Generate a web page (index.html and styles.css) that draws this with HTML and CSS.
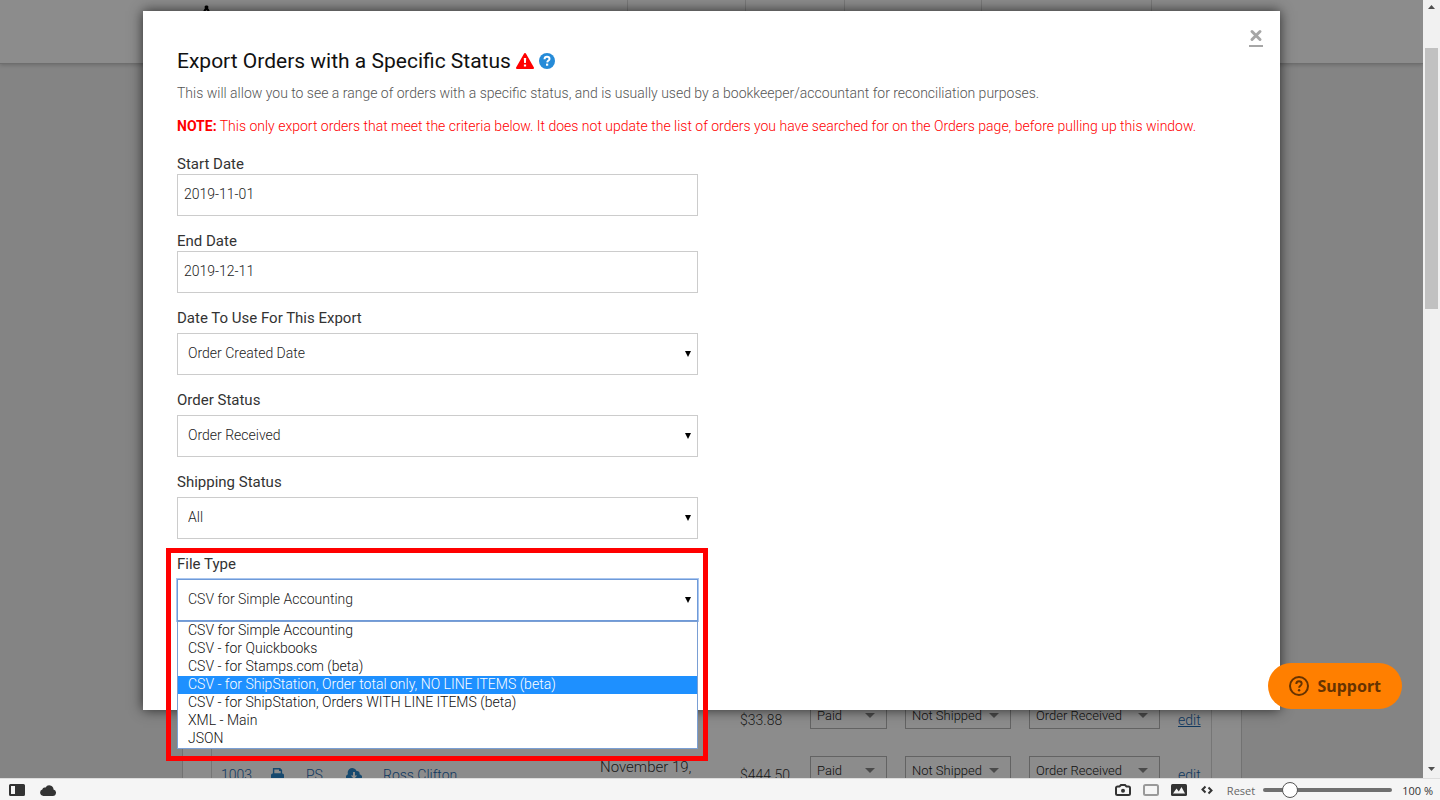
FILE: index.html
```html
<!DOCTYPE html>
<html lang="en">
<head>
    <meta charset="UTF-8">
    <meta name="viewport" content="width=device-width, initial-scale=1.0">
    <title>Export Orders</title>
    <link rel="stylesheet" href="styles.css">
</head>
<body>
    <div class="viewport">
        <div class="page">
            <header class="site-header">
                <svg class="logo" width="7" height="7" viewBox="0 0 7 7"><path d="M3.500 0.500a1.500 1.500 0 0 1 1.500 2.500L7 6.500H5L3.500 5 2 6.500H0L2 3A1.500 1.500 0 0 1 3.500.5z" fill="#000"/></svg>
                <nav class="site-nav">
                    <span class="nav-cell nav-wide"></span>
                    <span class="nav-cell nav-small"></span>
                    <span class="nav-cell nav-medium"></span>
                    <span class="nav-cell nav-large"></span>
                    <span class="nav-cell"></span>
                </nav>
            </header>

            <!-- Orders list behind the popup -->
            <main class="orders">
                <div class="orders-inner">
                    <table class="orders-table">
                        <colgroup>
                            <col class="col-id"><col class="col-print"><col class="col-ps"><col class="col-cloud"><col class="col-name"><col class="col-date"><col class="col-total"><col class="col-paid"><col class="col-ship"><col class="col-status"><col>
                        </colgroup>
                        <tbody>
                            <tr>
                                <td></td><td></td><td></td><td></td><td></td><td></td>
                                <td>$33.88</td>
                                <td><div class="mini-select"><select aria-label="Payment"><option>Paid</option></select></div></td>
                                <td><div class="mini-select"><select aria-label="Shipping"><option>Not Shipped</option></select></div></td>
                                <td><div class="mini-select"><select aria-label="Status"><option>Order Received</option></select></div></td>
                                <td><a class="edit" href="#">edit</a></td>
                            </tr>
                            <tr>
                                <td><a href="#">1003</a></td>
                                <td><a class="icon" href="#" aria-label="Print"><svg width="13" height="13" viewBox="0 0 13 13"><path d="M1.9 0h7.2l2 2v4H1.900zM3.300 1.400v4h6.400V3H8V1.400z" fill="currentColor" fill-rule="evenodd"/><path d="M1.500 5.600h10A1.500 1.500 0 0 1 13 7.100V11h-2v2H2v-2H0V7.100a1.500 1.500 0 0 1 1.500-1.500z" fill="currentColor"/></svg></a></td>
                                <td><a href="#">PS</a></td>
                                <td><a class="icon" href="#" aria-label="Download"><svg width="16" height="13" viewBox="0 0 16 13"><path d="M3.500 13A3.500 3.500 0 0 1 2 6.300 4.600 4.600 0 0 1 10.600 3a2.600 2.600 0 0 1 2.900 3.300A3.400 3.400 0 0 1 12.500 13zM7 4v3.500H4.800L8 11l3.200-3.500H9V4z" fill="currentColor" fill-rule="evenodd"/></svg></a></td>
                                <td><a href="#">Ross Clifton</a></td>
                                <td class="date">November 19, 2019</td>
                                <td>$444.50</td>
                                <td><div class="mini-select"><select aria-label="Payment"><option>Paid</option></select></div></td>
                                <td><div class="mini-select"><select aria-label="Shipping"><option>Not Shipped</option></select></div></td>
                                <td><div class="mini-select"><select aria-label="Status"><option>Order Received</option></select></div></td>
                                <td><a class="edit" href="#">edit</a></td>
                            </tr>
                        </tbody>
                    </table>
                </div>
            </main>

            <!-- Export popup -->
            <div class="overlay">
                <div class="modal">
                    <button type="button" class="close" aria-label="Close"><svg width="14" height="18" viewBox="0 0 14 18"><path d="M3 2.500l8 8M11 2.500l-8 8" stroke="#a6a6a6" stroke-width="3" stroke-linecap="round"/><path d="M0 16h14v2H0z" fill="#a6a6a6"/></svg></button>
                    <h2>Export Orders with a Specific Status
                        <svg width="18" height="16" viewBox="0 0 18 16"><path d="M9 0a1 1 0 0 1 .9.500l8 14a1 1 0 0 1-.9 1.500H1a1 1 0 0 1-.9-1.500l8-14A1 1 0 0 1 9 0z" fill="#f00"/><path d="M7.800 5h2.400L9.900 10H8.100zM7.900 11.500h2.200v2H7.900z" fill="#fff"/></svg>
                        <svg width="16" height="16" viewBox="0 0 16 16"><circle cx="8" cy="8" r="8" fill="#258bd8"/><path d="M5.500 6.200C5.600 4.600 6.600 3.800 8 3.800c1.500 0 2.500.8 2.500 2.100 0 1.600-2 1.700-2.300 3.400" fill="none" stroke="#fff" stroke-width="2"/><path d="M7 10.600h2.200v2.100H7z" fill="#fff"/></svg>
                    </h2>
                    <p class="intro">This will allow you to see a range of orders with a specific status, and is usually used by a bookkeeper/accountant for reconciliation purposes.</p>
                    <p class="note"><strong>NOTE:</strong> This only export orders that meet the criteria below. It does not update the list of orders you have searched for on the Orders page, before pulling up this window.</p>

                    <form class="export-form">
                        <div class="field">
                            <label for="startDate">Start Date</label>
                            <input type="text" id="startDate" value="2019-11-01">
                        </div>
                        <div class="field">
                            <label for="endDate">End Date</label>
                            <input type="text" id="endDate" value="2019-12-11">
                        </div>
                        <div class="field">
                            <label for="dateType">Date To Use For This Export</label>
                            <div class="select-wrap">
                                <select id="dateType"><option>Order Created Date</option></select>
                            </div>
                        </div>
                        <div class="field">
                            <label for="orderStatus">Order Status</label>
                            <div class="select-wrap">
                                <select id="orderStatus"><option>Order Received</option></select>
                            </div>
                        </div>
                        <div class="field">
                            <label for="shippingStatus">Shipping Status</label>
                            <div class="select-wrap">
                                <select id="shippingStatus"><option>All</option></select>
                            </div>
                        </div>
                        <div class="field field-open">
                            <label for="fileType">File Type</label>
                            <div class="select-wrap">
                                <select id="fileType"><option>CSV for Simple Accounting</option></select>
                                <ul class="option-list">
                                    <li>CSV for Simple Accounting</li>
                                    <li>CSV - for Quickbooks</li>
                                    <li>CSV - for Stamps.com (beta)</li>
                                    <li class="active">CSV - for ShipStation, Order total only, NO LINE ITEMS (beta)</li>
                                    <li>CSV - for ShipStation, Orders WITH LINE ITEMS (beta)</li>
                                    <li>XML - Main</li>
                                    <li>JSON</li>
                                </ul>
                            </div>
                        </div>
                    </form>
                </div>
            </div>

            <button type="button" class="support">
                <svg width="20" height="20" viewBox="0 0 20 20" fill="none" stroke="#663300"><circle cx="10" cy="10" r="9" stroke-width="2"/><path d="M7.300 8c0-1.700 1.100-2.700 2.700-2.700s2.700 1 2.700 2.500c0 1.900-2.600 2-2.600 4" stroke-width="1.900"/><circle cx="10.100" cy="14.300" r="1.200" fill="#663300" stroke="none"/></svg>
                Support
            </button>
        </div>

        <div class="scrollbar">
            <svg width="7" height="4" viewBox="0 0 7 4"><path d="M0 4L3.500 0 7 4z" fill="#505050"/></svg>
            <div class="track"><div class="thumb"></div></div>
            <svg width="7" height="4" viewBox="0 0 7 4"><path d="M0 0l3.500 4L7 0z" fill="#505050"/></svg>
        </div>
    </div>

    <footer class="status-bar">
        <svg width="16" height="12" viewBox="0 0 16 12"><path d="M1.500 0h13A1.500 1.500 0 0 1 16 1.500v9a1.500 1.500 0 0 1-1.500 1.500h-13A1.500 1.500 0 0 1 0 10.500v-9A1.500 1.500 0 0 1 1.500 0zM2 2v8h4V2z" fill="#333" fill-rule="evenodd"/></svg>
        <svg width="16" height="11" viewBox="0 0 16 11"><path d="M3.300 11a3.300 3.300 0 0 1-1-6.400 2.600 2.600 0 0 1 3.300-2 4.200 4.200 0 0 1 7.900 1.900A3.300 3.300 0 0 1 12.800 11z" fill="#333"/></svg>
        <div class="tools">
            <svg width="16" height="12" viewBox="0 0 16 12"><path d="M2.500 2.500h2L6 1h4l1.500 1.500h2A1.500 1.500 0 0 1 15 4v5.500a1.500 1.500 0 0 1-1.500 1.500h-11A1.500 1.500 0 0 1 1 9.500V4a1.500 1.500 0 0 1 1.500-1.500z" fill="none" stroke="#333" stroke-width="2"/><circle cx="8" cy="6.700" r="2" fill="#333"/></svg>
            <svg width="16" height="12" viewBox="0 0 16 12"><rect x="1" y="1" width="14" height="10" rx="1.500" fill="none" stroke="#999" stroke-width="2"/></svg>
            <svg width="16" height="12" viewBox="0 0 16 12"><rect width="16" height="12" rx="1.500" fill="#333"/><path d="M2 9.500l3.500-5 2.300 3L10.500 3 14 9.500z" fill="#f5f5f5"/></svg>
            <svg class="code" width="12" height="10" viewBox="0 0 12 10"><path d="M4.500 1.500L1.500 4.500l3 3M7.500 2.500l3 3-3 3" fill="none" stroke="#333" stroke-width="2"/></svg>
            <button type="button" class="reset">Reset</button>
            <input type="range" class="zoom" min="0" max="100" value="17" aria-label="Zoom">
            <span>100 %</span>
        </div>
    </footer>
</body>
</html>
```
FILE: styles.css
```css
* {
    box-sizing: border-box;
}
body {
    font-family: Roboto, Arial, sans-serif;
    font-size: 14px;
    font-weight: 300;
    margin: 0;
    height: 100vh;
    display: flex;
    flex-direction: column;
    overflow: hidden;
}
svg {
    display: block;
}
button {
    font-family: inherit;
    border: none;
    background: none;
    padding: 0;
    cursor: pointer;
}
.viewport {
    flex: 1;
    min-height: 0;
    display: flex;
}
.page {
    flex: 1;
    position: relative;
    overflow: hidden;
    background-color: #f0f0f0;
}

/* Header */
.site-header {
    height: 64px;
    background-color: #fff;
    border-bottom: 1px solid #c8c8c8;
    box-shadow: 0 1px 4px rgba(0, 0, 0, 0.2);
    display: flex;
    justify-content: space-between;
}
.logo {
    margin: 5px 0 0 203px;
}
.site-nav {
    display: flex;
    width: 796px;
}
.nav-cell {
    border-left: 1px solid #ddd;
}
.nav-wide {
    width: 118px;
}
.nav-small {
    width: 99px;
}
.nav-medium {
    width: 137px;
}
.nav-large {
    width: 170px;
}

/* Orders table */
.orders {
    margin: 0 181px 0 182px;
    padding: 0 29px 0 28px;
    background-color: #fff;
    border: solid #d0d0d0;
    border-width: 0 1px;
}
.orders-inner {
    padding-top: 628px;
    border: solid #d8d8d8;
    border-width: 0 1px;
}
.orders-table {
    width: 100%;
    table-layout: fixed;
    border-collapse: collapse;
    color: #333;
}
.orders-table td {
    height: 55px;
    padding: 0 9px;
    vertical-align: middle;
}
.orders-table a {
    color: #2068b0;
    text-decoration: none;
}
.orders-table a.icon {
    color: #2a86c8;
}
.orders-table a.edit {
    text-decoration: underline;
}
.col-id { width: 50px; }
.col-print { width: 35px; }
.col-ps { width: 40px; }
.col-cloud { width: 37px; }
.col-name { width: 217px; }
.col-date { width: 140px; }
.col-total { width: 70px; }
.col-paid { width: 95px; }
.col-ship { width: 124px; }
.col-status { width: 149px; }
.orders-table .date {
    font-size: 15px;
    line-height: 20px;
    padding: 4px 20px 0 9px;
}
.mini-select {
    position: relative;
    margin-bottom: 10px;
}
.mini-select::after {
    content: "";
    position: absolute;
    right: 12px;
    top: 12px;
    border: 5px solid transparent;
    border-top-color: #888;
    border-bottom: none;
}
.mini-select select {
    appearance: none;
    display: block;
    width: 100%;
    height: 28px;
    padding: 2px 6px 0;
    font: 300 13px Roboto, Arial, sans-serif;
    color: #222;
    background-color: #fff;
    border: 1px solid #b5b5b5;
    border-radius: 0;
}

/* Popup */
.overlay {
    position: absolute;
    inset: 0;
    padding: 11px 143px 0;
    background-color: rgba(0, 0, 0, 0.45);
}
.modal {
    position: relative;
    background-color: #fff;
    padding: 34px 34px 89px;
    box-shadow: 0 0 12px rgba(0, 0, 0, 0.7);
}
.close {
    position: absolute;
    top: 18px;
    right: 17px;
}
.modal h2 {
    display: flex;
    align-items: center;
    gap: 5px;
    margin: 0 0 6px;
    font-size: 21px;
    line-height: 32px;
    font-weight: 400;
    color: #111;
}
.modal p {
    margin: 0 0 13px;
    line-height: 20px;
}
.modal .intro {
    color: #555;
}
.modal .note {
    margin-bottom: 18px;
    color: #f00;
}
.note strong {
    font-weight: 700;
}
.export-form {
    width: 521px;
    display: flex;
    flex-direction: column;
    gap: 15px;
}
.field label {
    display: block;
    font-size: 15px;
    line-height: 20px;
    font-weight: 400;
    color: #333;
}
.field input,
.field select {
    display: block;
    width: 100%;
    height: 42px;
    border: 1px solid #ccc;
    border-radius: 0;
    background-color: #fff;
    color: #222;
    font: 300 14px Roboto, Arial, sans-serif;
}
.field input {
    padding: 0 6px 2px;
}
.field select {
    appearance: none;
    padding: 0 10px 2px;
}
.select-wrap {
    position: relative;
    margin-top: 5px;
}
.select-wrap::after {
    content: "";
    position: absolute;
    right: 7px;
    top: 18px;
    border: 3px solid transparent;
    border-top: 6px solid #000;
    border-bottom: none;
}
.field-open {
    position: relative;
}
.field-open select {
    border-color: #6f9ad8;
    outline: 1px solid #a9c6f0;
}
.field-open::before {
    content: "";
    position: absolute;
    inset: -6px -10px -140px -11px;
    border: 5px solid #f00;
}
.option-list {
    position: absolute;
    top: 42px;
    left: 0;
    right: 0;
    z-index: 1;
    margin: 0;
    padding: 0;
    list-style: none;
    background-color: #fff;
    border: 1px solid #7a9fd4;
    color: #111;
}
.option-list li {
    padding: 0 10px 2px;
    line-height: 16px;
}
.option-list .active {
    background-color: #1e90ff;
    color: #fff;
}

/* Support button */
.support {
    position: absolute;
    right: 21px;
    bottom: 69px;
    display: flex;
    align-items: center;
    gap: 8px;
    height: 46px;
    padding: 0 21px;
    border-radius: 23px;
    background-color: #ff7f00;
    color: #663300;
    font: 700 16px "Noto Sans", sans-serif;
}

/* Scrollbar */
.scrollbar {
    width: 17px;
    padding: 5px 2px 7px;
    background-color: #f1f1f1;
    display: flex;
    flex-direction: column;
    align-items: center;
}
.track {
    flex: 1;
    width: 13px;
    padding-top: 39px;
}
.thumb {
    height: 261px;
    background-color: #c1c1c1;
}

/* Bottom bar */
.status-bar {
    height: 22px;
    padding: 1px 7px 0 9px;
    display: flex;
    align-items: center;
    gap: 15px;
    background-color: #f5f5f5;
    border-top: 1px solid #ddd;
    font: 400 11px "Open Sans", sans-serif;
    color: #333;
}
.tools {
    margin-left: auto;
    display: flex;
    align-items: center;
    gap: 12px;
}
.code {
    margin: 0 2px;
}
.reset {
    font-size: 11px;
    color: #666;
}
.zoom {
    appearance: none;
    width: 129px;
    height: 16px;
    margin: 0 -2px 0 -4px;
    background: none;
}
.zoom::-webkit-slider-runnable-track {
    height: 4px;
    border-radius: 2px;
    background-color: #707070;
}
.zoom::-webkit-slider-thumb {
    appearance: none;
    width: 16px;
    height: 16px;
    margin-top: -6px;
    border: 1px solid #555;
    border-radius: 50%;
    background-color: #fff;
}
```
